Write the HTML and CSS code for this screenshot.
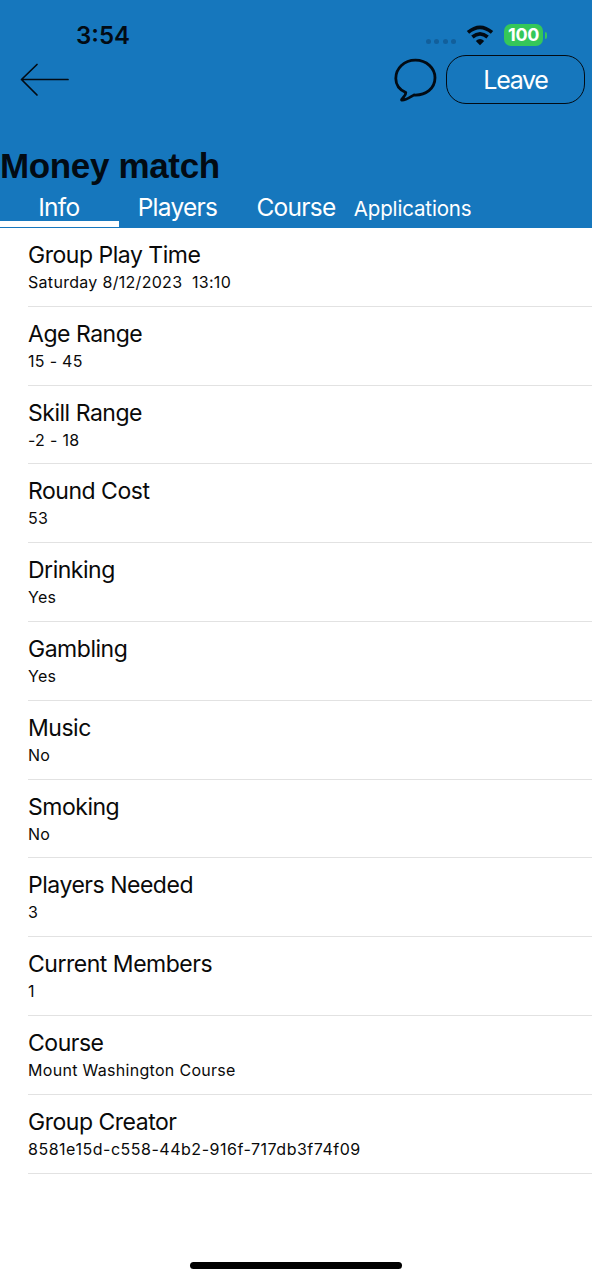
FILE: index.html
```html
<!DOCTYPE html>
<html lang="en">
<head>
<meta charset="utf-8">
<title>Money match</title>
<link rel="stylesheet" href="styles.css">
</head>
<body>
<div class="screen">
  <header class="header">
    <div class="status">
      <span class="time">3:54</span>
      <div class="indicators">
        <span class="dots"><i></i><i></i><i></i><i></i></span>
        <svg class="wifi" width="28" height="21" viewBox="0 0 28 21"><g fill="none" stroke="#020b14" stroke-width="3.6"><path d="M2 7.4Q14 -2.8 26 7.4"/><path d="M6.4 12Q14 5.6 21.6 12"/></g><path d="M14 20.2L9.8 16Q14 12.2 18.2 16Z" fill="#020b14"/></svg>
        <span class="battery">100</span><span class="battery-tip"></span>
      </div>
    </div>
    <nav class="nav">
      <svg class="back" width="50" height="34" viewBox="0 0 50 34" fill="none" stroke="#020b14" stroke-width="1.7" stroke-linecap="round" stroke-linejoin="round"><path d="M48 16.5H1.5M17 1.5L1.5 16.5L17 32"/></svg>
      <svg class="chat" width="44" height="46" viewBox="0 0 44 46" fill="none" stroke="#020b14" stroke-width="2.8" stroke-linejoin="round"><path d="M12.8 35.6C6.5 32.6 2.8 27.4 2.8 21.4C2.8 11.2 11.2 3.2 22.4 3.2C33.6 3.2 42 11.1 42 20.8C42 31.5 32.8 38.6 21 38C18 39.3 13.5 43.5 8.6 43.1C8.6 41.2 13 39 12.8 35.6Z"/></svg>
      <span class="leave">Leave</span>
    </nav>
    <h1 class="title">Money match</h1>
    <div class="tabs">
      <span class="tab active">Info</span>
      <span class="tab">Players</span>
      <span class="tab">Course</span>
      <span class="tab small">Applications</span>
    </div>
  </header>
  <main class="list">
    <div class="row"><div class="label">Group Play Time</div><div class="value">Saturday 8/12/2023&nbsp; 13:10</div></div>
    <div class="row"><div class="label">Age Range</div><div class="value">15 - 45</div></div>
    <div class="row"><div class="label">Skill Range</div><div class="value">-2 - 18</div></div>
    <div class="row"><div class="label">Round Cost</div><div class="value">53</div></div>
    <div class="row"><div class="label">Drinking</div><div class="value">Yes</div></div>
    <div class="row"><div class="label">Gambling</div><div class="value">Yes</div></div>
    <div class="row"><div class="label">Music</div><div class="value">No</div></div>
    <div class="row"><div class="label">Smoking</div><div class="value">No</div></div>
    <div class="row"><div class="label">Players Needed</div><div class="value">3</div></div>
    <div class="row"><div class="label">Current Members</div><div class="value">1</div></div>
    <div class="row"><div class="label">Course</div><div class="value">Mount Washington Course</div></div>
    <div class="row"><div class="label">Group Creator</div><div class="value id">8581e15d-c558-44b2-916f-717db3f74f09</div></div>
  </main>
  <footer class="footer"><span class="home"></span></footer>
</div>
</body>
</html>
```
FILE: styles.css
```css
* { box-sizing: border-box; }
body { margin: 0; background: #fff; font-family: Inter, "Liberation Sans", sans-serif; color: #0a0a0a; }
.screen { width: 592px; height: 1280px; display: flex; flex-direction: column; overflow: hidden; }
.header { height: 228px; flex: none; background: #1677bd; display: flex; flex-direction: column; }
.status { height: 55px; padding: 15px 45px 0 76px; display: flex; justify-content: space-between; align-items: center; }
.time { font-size: 24px; line-height: 40px; font-weight: 600; color: #020b14; padding-top: 2px; }
.indicators { display: flex; align-items: center; }
.dots { display: flex; gap: 3.4px; margin: 13px 10px 0 0; }
.dots i { width: 5px; height: 5px; border-radius: 50%; background: #125f9b; }
.wifi { margin-right: 10px; }
.battery { width: 39px; height: 22px; border-radius: 7px; background: #35c759; color: #fff; font-weight: 700; font-size: 18px; letter-spacing: -0.3px; line-height: 22px; text-align: center; }
.battery-tip { width: 2px; height: 7px; margin-left: 2px; border-radius: 0 3px 3px 0; background: #35c759; }
.nav { height: 49px; padding: 0 7px 0 20px; display: flex; align-items: center; }
.chat { margin-left: auto; margin-right: 9px; }
.leave { width: 139px; height: 49px; border: 1.5px solid #020b14; border-radius: 20px; color: #fff; font-size: 25px; letter-spacing: -1.3px; line-height: 49px; text-align: center; }
.title { margin: 41px 0 0; font: bold 35px/42px "Liberation Sans", Arial, sans-serif; letter-spacing: -0.35px; color: #020b14; white-space: nowrap; }
.tabs { display: flex; height: 41px; }
.tab { width: 118.6px; border-bottom: 6px solid transparent; height: 40px; color: #fff; font-size: 24.5px; letter-spacing: -0.75px; line-height: 41px; text-align: center; white-space: nowrap; padding-right: 1px; }
.tab.active { border-color: #fff; }
.tab.small { font-size: 20.5px; letter-spacing: -0.15px; line-height: 43px; margin-left: -2px; padding-right: 2px; }
.row { height: 78.8px; margin-left: 28px; padding-top: 12px; border-bottom: 1px solid #e2e2e2; }
.label { font-size: 23px; line-height: 30px; letter-spacing: -0.48px; white-space: nowrap; }
.value { font-size: 16px; line-height: 25px; letter-spacing: 0.3px; white-space: nowrap; }
.value.id { letter-spacing: 0.52px; }
.footer { flex: 1; display: flex; justify-content: center; align-items: flex-end; padding-bottom: 11px; }
.home { width: 212px; height: 7px; border-radius: 4px; background: #000; }
```
